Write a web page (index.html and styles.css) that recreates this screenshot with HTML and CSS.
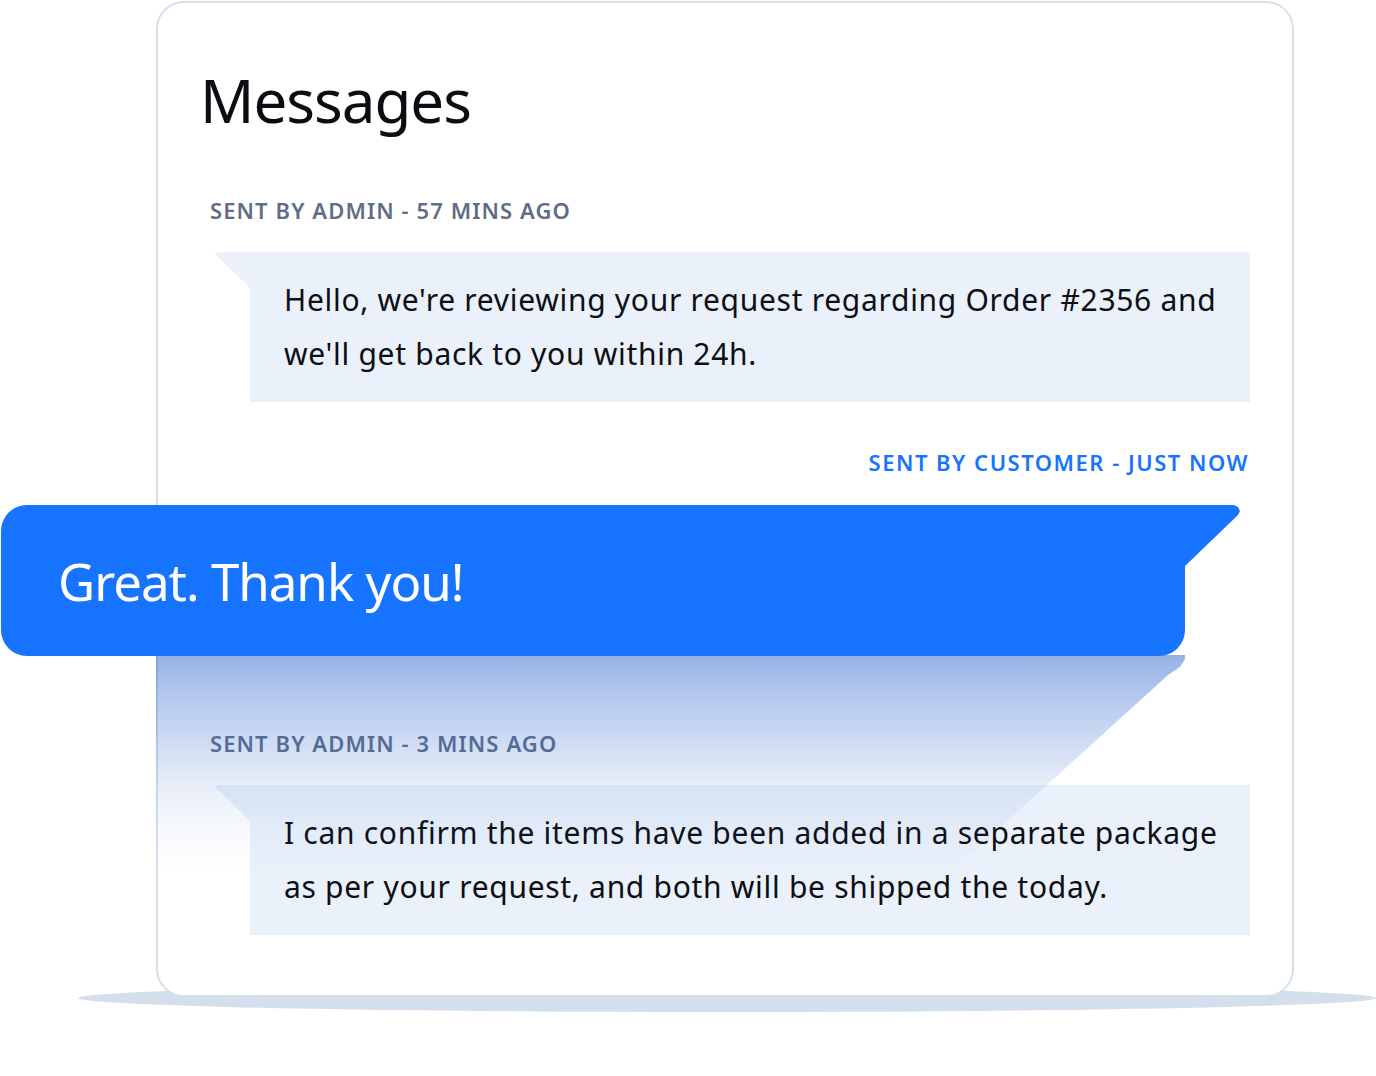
FILE: index.html
```html
<!DOCTYPE html>
<html lang="en">
  <head>
    <meta charset="utf-8">
    <title>Messages</title>
    <meta name="viewport" content="width=device-width">
    <link rel="stylesheet" href="styles.css">
  </head>
  <body>
    <div class="stage">
      <div class="card">
        <h1 class="title">Messages</h1>

        <div class="msg msg-first">
          <div class="meta">SENT BY ADMIN - 57 MINS AGO</div>
          <div class="bubble">Hello, we're reviewing your request regarding Order #2356 and<br>we'll get back to you within 24h.</div>
        </div>

        <div class="msg msg-customer">
          <div class="meta meta-customer">SENT BY CUSTOMER - JUST NOW</div>
          <div class="bubble-customer">Great. Thank you!</div>
        </div>

        <div class="msg msg-last">
          <div class="meta">SENT BY ADMIN - 3 MINS AGO</div>
          <div class="bubble">I can confirm the items have been added in a separate package<br>as per your request, and both will be shipped the today.</div>
        </div>

        <div class="fade"></div>
      </div>
    </div>
  </body>
</html>
```

FILE: styles.css
```css
      html, body {
          margin: 0;
          background: #fff;
      }
      body {
          font-family: 'Noto Sans', 'Open Sans', sans-serif;
          color: #0d0f14;
      }

      .stage {
          position: relative;
          padding: 1px 0 0 156px;
          height: 1075px;
      }
      /* soft floor under the card */
      .stage::before {
          content: "";
          position: absolute;
          left: 78px;
          top: 984px;
          width: 1298px;
          height: 28px;
          border-radius: 50%;
          background: #d5dfeb;
      }

      .card {
          position: relative;
          box-sizing: border-box;
          width: 1138px;
          height: 996px;
          padding: 0 42px;
          border: 2px solid #d6e0ec;
          border-radius: 28px;
          background: #fff;
      }

      .title {
          margin: 0;
          padding-top: 57px;
          font-size: 60px;
          font-weight: 400;
          line-height: 80px;
          letter-spacing: -1px;
          color: #0b0d12;
      }

      .meta {
          margin-left: 10px;
          font-size: 22px;
          font-weight: 600;
          line-height: 30px;
          letter-spacing: 1.1px;
          color: #5f6e86;
      }
      .meta-customer {
          text-align: right;
          margin-right: 1px;
          letter-spacing: 1.5px;
          color: #1774ff;
      }

      .msg {
          display: flex;
          flex-direction: column;
          gap: 27px;
      }
      .msg-first {
          margin-top: 55px;
      }
      .msg-customer {
          margin-top: 45px;
          gap: 28px;
      }
      .msg-last {
          margin-top: 72px;
      }

      .bubble {
          position: relative;
          box-sizing: border-box;
          width: 1000px;
          margin-left: 50px;
          padding: 21px 0 21px 34px;
          font-size: 30px;
          line-height: 54px;
          letter-spacing: 0.7px;
          white-space: nowrap;
          background: #eaf1fa;
      }
      .bubble::before {
          content: "";
          position: absolute;
          left: -35px;
          top: 0;
          width: 35px;
          height: 36px;
          background: #eaf1fa;
          clip-path: polygon(0 2px, 2px 0, 100% 0, 100% 100%);
      }

      .bubble-customer {
          position: relative;
          box-sizing: border-box;
          width: 1184px;
          height: 151px;
          margin-left: -199px;
          padding-left: 57px;
          display: flex;
          align-items: center;
          font-size: 51px;
          letter-spacing: -1px;
          color: #fff;
          background: #1774ff;
          border-radius: 26px 0 26px 26px;
      }
      .bubble-customer::after {
          content: "";
          position: absolute;
          right: -55px;
          top: 0;
          width: 56px;
          height: 62px;
          background: #1774ff;
          clip-path: polygon(0 0, 50px 0, 54px 2px, 56px 6px, 54px 10px, 0 62px);
      }

      /* long shadow cast by the customer bubble */
      .fade {
          position: absolute;
          left: -2px;
          top: 652px;
          width: 1040px;
          height: 260px;
          pointer-events: none;
          background: linear-gradient(to bottom,
              rgba(44, 101, 204, 0.5) 0,
              rgba(44, 101, 204, 0.36) 40px,
              rgba(44, 101, 204, 0.22) 90px,
              rgba(44, 101, 204, 0.11) 130px,
              rgba(44, 101, 204, 0.04) 175px,
              rgba(44, 101, 204, 0) 220px);
          clip-path: polygon(0 0, 1029px 0, 1029px 4px, 1024px 12px, 1012px 20px, 746px 262px, 0 262px);
      }
```
